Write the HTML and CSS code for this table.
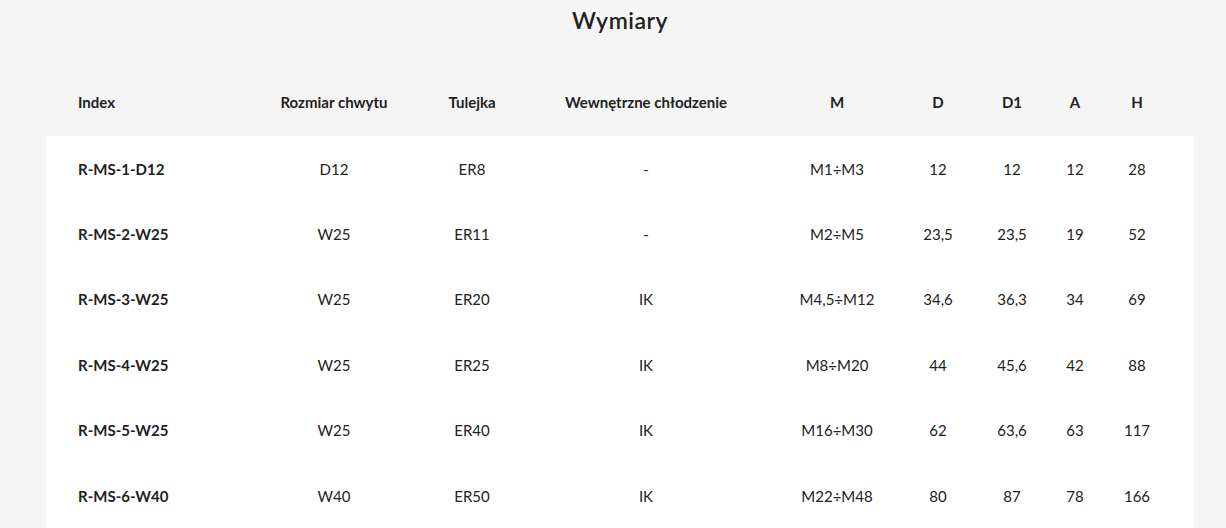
FILE: index.html
```html
<!DOCTYPE html>
<html lang="pl">
<head>
<meta charset="utf-8">
<title>Wymiary</title>
<link rel="stylesheet" href="styles.css">
</head>
<body>
<main class="page">
  <h2 class="title">Wymiary</h2>
  <div class="table">
    <div class="row head">
      <div class="cell first">Index</div>
      <div class="cell">Rozmiar chwytu</div>
      <div class="cell">Tulejka</div>
      <div class="cell">Wewnętrzne chłodzenie</div>
      <div class="cell">M</div>
      <div class="cell">D</div>
      <div class="cell">D1</div>
      <div class="cell">A</div>
      <div class="cell">H</div>
    </div>
    <div class="body">
      <div class="row">
        <div class="cell first">R-MS-1-D12</div>
        <div class="cell">D12</div>
        <div class="cell">ER8</div>
        <div class="cell">-</div>
        <div class="cell">M1÷M3</div>
        <div class="cell">12</div>
        <div class="cell">12</div>
        <div class="cell">12</div>
        <div class="cell">28</div>
      </div>
      <div class="row">
        <div class="cell first">R-MS-2-W25</div>
        <div class="cell">W25</div>
        <div class="cell">ER11</div>
        <div class="cell">-</div>
        <div class="cell">M2÷M5</div>
        <div class="cell">23,5</div>
        <div class="cell">23,5</div>
        <div class="cell">19</div>
        <div class="cell">52</div>
      </div>
      <div class="row">
        <div class="cell first">R-MS-3-W25</div>
        <div class="cell">W25</div>
        <div class="cell">ER20</div>
        <div class="cell">IK</div>
        <div class="cell">M4,5÷M12</div>
        <div class="cell">34,6</div>
        <div class="cell">36,3</div>
        <div class="cell">34</div>
        <div class="cell">69</div>
      </div>
      <div class="row">
        <div class="cell first">R-MS-4-W25</div>
        <div class="cell">W25</div>
        <div class="cell">ER25</div>
        <div class="cell">IK</div>
        <div class="cell">M8÷M20</div>
        <div class="cell">44</div>
        <div class="cell">45,6</div>
        <div class="cell">42</div>
        <div class="cell">88</div>
      </div>
      <div class="row">
        <div class="cell first">R-MS-5-W25</div>
        <div class="cell">W25</div>
        <div class="cell">ER40</div>
        <div class="cell">IK</div>
        <div class="cell">M16÷M30</div>
        <div class="cell">62</div>
        <div class="cell">63,6</div>
        <div class="cell">63</div>
        <div class="cell">117</div>
      </div>
      <div class="row">
        <div class="cell first">R-MS-6-W40</div>
        <div class="cell">W40</div>
        <div class="cell">ER50</div>
        <div class="cell">IK</div>
        <div class="cell">M22÷M48</div>
        <div class="cell">80</div>
        <div class="cell">87</div>
        <div class="cell">78</div>
        <div class="cell">166</div>
      </div>
    </div>
  </div>
</main>
</body>
</html>
```
FILE: styles.css
```css
html, body {
  margin: 0;
  padding: 0;
  background: #f5f5f5;
  overflow: hidden;
}
body {
  font-family: Lato, "Open Sans", sans-serif;
  color: #222;
  font-size: 15px;
}
.page {
  padding: 5px 33px 0 47px;
}
.title {
  margin: 0;
  font-size: 23px;
  line-height: 30px;
  font-weight: 600;
  text-align: center;
  color: #222;
  letter-spacing: 0.5px;
}
.table {
  margin-top: 36px;
}
.row {
  display: grid;
  grid-template-columns: 187px 200px 76px 272px 110px 92px 56px 70px 54px;
  padding-right: 29px;
  height: 65px;
  align-items: center;
  box-sizing: border-box;
}
.head {
  font-weight: 700;
  padding-bottom: 3px;
}
.body {
  background: #fff;
}
.body .row {
  height: 65.4px;
}
.cell {
  text-align: center;
  white-space: nowrap;
}
.cell.first {
  text-align: left;
  padding-left: 31px;
}
.body .cell.first {
  font-weight: 700;
}
```
